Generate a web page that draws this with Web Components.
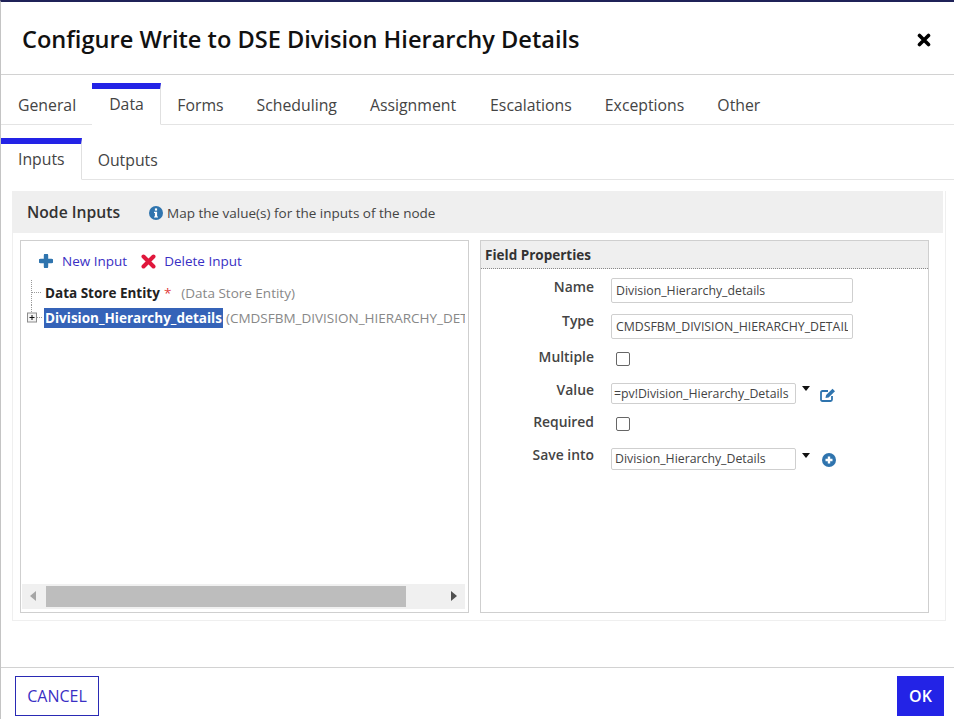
<!DOCTYPE html>
<html>
<head>
<meta charset="utf-8">
<title>Configure Write to DSE Division Hierarchy Details</title>
<style>
    html, body { margin: 0; padding: 0; background: #fff; }
    body { font-family: "Open Sans", "Liberation Sans", sans-serif; color: #444; overflow: hidden; }
</style>
</head>
<body>
<node-dialog heading="Configure Write to DSE Division Hierarchy Details">
    <tab-bar slot="tabs" top="8">
        <tab-item>General</tab-item>
        <tab-item active>Data</tab-item>
        <tab-item style="margin-left:.5px">Forms</tab-item>
        <tab-item>Scheduling</tab-item>
        <tab-item>Assignment</tab-item>
        <tab-item style="margin-left:1px">Escalations</tab-item>
        <tab-item>Exceptions</tab-item>
        <tab-item>Other</tab-item>
    </tab-bar>
    <tab-bar slot="tabs" top="13">
        <tab-item active>Inputs</tab-item>
        <tab-item>Outputs</tab-item>
    </tab-bar>
    <node-panel heading="Node Inputs" hint="Map the value(s) for the inputs of the node">
        <input-tree slot="left"></input-tree>
        <field-properties slot="right"></field-properties>
    </node-panel>
</node-dialog>

<script>
const BLUE = '#2323e6';
const ICON_BLUE = '#2f74ae';

// --- dialog shell ---
class NodeDialog extends HTMLElement {
    constructor() {
        super();
        this.attachShadow({ mode: 'open' });
    }
    connectedCallback() {
        const heading = this.getAttribute('heading') || '';
        this.shadowRoot.innerHTML = `
            <style>
                :host { display: flex; flex-direction: column; height: 719px; box-sizing: border-box;
                        border-top: 2px solid #1f2258; border-left: 1px solid #c4c4c4; }
                .head { height: 73px; flex: none; box-sizing: border-box; border-bottom: 1px solid #d2d2d2; padding: 3px 23px 0 21px;
                        display: flex; align-items: center; justify-content: space-between; }
                h1 { margin: 0; font-size: 23.6px; font-weight: 600; color: #111; line-height: 1; }
                svg { display: block; }
                .body { flex: 1; min-height: 0; }
                .foot { height: 52px; flex: none; box-sizing: border-box; border-top: 1px solid #d2d2d2; padding: 8px 10px 3px 14px;
                        display: flex; justify-content: space-between; }
                button { font: 600 16px "Open Sans", "Liberation Sans", sans-serif; height: 40px; box-sizing: border-box; padding: 0; }
                .cancel { width: 84px; background: #fff; color: #3a2fc4; border: 1px solid #2a2ab4; font-weight: 400; }
                .ok { width: 47px; background: ${BLUE}; color: #fff; border: 0; font-weight: 600; }
            </style>
            <div class="head">
                <h1>${heading}</h1>
                <svg width="14" height="14" viewBox="0 0 14 14"><path d="M2.500 2.500l9 9M11.500 2.500l-9 9" stroke="#000" stroke-width="3.600" stroke-linecap="round"/></svg>
            </div>
            <div class="body"><slot name="tabs"></slot><slot></slot></div>
            <div class="foot">
                <button class="cancel">CANCEL</button>
                <button class="ok">OK</button>
            </div>
        `;
    }
}

// --- tabs ---
class TabBar extends HTMLElement {
    constructor() {
        super();
        this.attachShadow({ mode: 'open' });
    }
    connectedCallback() {
        const top = this.getAttribute('top') || '0';
        this.shadowRoot.innerHTML = `
            <style>
                :host { display: flex; align-items: flex-end; border-bottom: 1px solid #e4e4e4;
                        padding: ${top}px 0 0 17px; gap: 33px; }
            </style>
            <slot></slot>
        `;
    }
}

class TabItem extends HTMLElement {
    constructor() {
        super();
        this.attachShadow({ mode: 'open' });
    }
    connectedCallback() {
        this.shadowRoot.innerHTML = `
            <style>
                :host { display: block; font-size: 15.8px; line-height: 22px; color: #444; padding: 9px 0 9px; margin-bottom: -1px; }
                :host([active]) { border-top: 6px solid ${BLUE}; border-right: 1px solid #e0e0e0; border-bottom: 1px solid #fff;
                                  padding: 4px 16px 9px 17px; margin-left: -17px; margin-right: -17px; }
            </style>
            <slot></slot>
        `;
    }
}

// --- grey panel with the two boxes ---
class NodePanel extends HTMLElement {
    constructor() {
        super();
        this.attachShadow({ mode: 'open' });
    }
    connectedCallback() {
        this.shadowRoot.innerHTML = `
            <style>
                :host { display: block; margin: 11px 8px 0 11px; height: 430px; box-sizing: border-box; border: 1px solid #efefef; border-top: 0; }
                .bar { height: 42px; background: #efefef; display: flex; align-items: center; padding-left: 14px; margin-right: 2px; }
                .title { font-size: 15.7px; font-weight: 600; color: #333; width: 122px; }
                .hint { font-size: 13.5px; color: #444; display: flex; align-items: center; gap: 4px; margin-top: 1px; }
                .cols { display: flex; gap: 11px; padding: 7px 0 0 7px; }
                svg { display: block; }
            </style>
            <div class="bar">
                <span class="title">${this.getAttribute('heading')}</span>
                <span class="hint">
                    <svg width="14" height="14" viewBox="0 0 14 14"><circle cx="7" cy="7" r="7" fill="${ICON_BLUE}"/><rect x="5.900" y="2.400" width="2.200" height="2.200" fill="#fff"/><path d="M5 5.800h3.100v4.600H9v1.200H5v-1.200h.9V7H5z" fill="#fff"/></svg>
                    ${this.getAttribute('hint')}
                </span>
            </div>
            <div class="cols"><slot name="left"></slot><slot name="right"></slot></div>
        `;
    }
}

// --- left box: toolbar, tree, scrollbar ---
class InputTree extends HTMLElement {
    constructor() {
        super();
        this.attachShadow({ mode: 'open' });
    }
    connectedCallback() {
        this.shadowRoot.innerHTML = `
            <style>
                :host { display: flex; flex-direction: column; width: 449px; height: 373px; box-sizing: border-box; border: 1px solid #cfcfcf; }
                .tools { display: flex; align-items: center; padding: 10px 0 0 18px; height: 30px; box-sizing: border-box; font-size: 13.5px; color: #3a2fc4; }
                .tools svg { display: block; margin-right: 8px; }
                .tools svg:first-child { margin-right: 9px; }
                .tools span { margin-right: 14px; }
                .tree { padding: 9px 0 0 10px; width: 444px; box-sizing: border-box; overflow: hidden; white-space: nowrap; font-size: 13.5px; line-height: 20px; }
                .row { display: flex; align-items: center; height: 25px; }
                .row svg { display: block; flex: none; }
                b { font-weight: 700; color: #222; }
                i { font-style: normal; color: #888; }
                .req { color: #e03a3a; margin: 0 10px 0 4px; }
                .sel { background: #3563b8; color: #fff; padding: 0 1px; margin-right: 3px; }
                .scroll { margin: auto 3px 3px 1px; height: 25px; background: #f0f0f0; position: relative; }
                .thumb { position: absolute; left: 24px; top: 2px; bottom: 2px; width: 360px; background: #bdbdbd; }
                .arrow { position: absolute; top: 7px; width: 0; height: 0; border-top: 5.500px solid transparent; border-bottom: 5.500px solid transparent; }
                .al { left: 8px; border-right: 6px solid #a6a6a6; }
                .ar { right: 8px; border-left: 6px solid #505050; }
            </style>
            <div class="tools">
                <svg width="14" height="14" viewBox="0 0 14 14"><path d="M7 1.500v11M1.500 7h11" stroke="${ICON_BLUE}" stroke-width="4.400" stroke-linecap="round" fill="none"/></svg>
                <span>New Input</span>
                <svg width="15" height="15" viewBox="0 0 15 15"><path d="M2.500 2.500l10 10M12.500 2.500l-10 10" stroke="#e0173c" stroke-width="4" stroke-linecap="round"/></svg>
                <span>Delete Input</span>
            </div>
            <div class="tree">
                <div class="row">
                    <svg width="14" height="25" viewBox="0 0 14 25"><path d="M.5 0v25M1 12.500h9" stroke="#999" stroke-dasharray="1 1" fill="none"/></svg>
                    <b>Data Store Entity</b><span class="req">*</span><i>(Data Store Entity)</i>
                </div>
                <div class="row">
                    <svg width="17" height="25" viewBox="0 0 17 25" style="margin-left:-4px"><path d="M4.500 0v7M10 12.500h6" stroke="#999" stroke-dasharray="1 1" fill="none"/><rect x=".5" y="8" width="9" height="9" fill="#f4f4f4" stroke="#8c8c8c"/><path d="M2.500 12.500h5M5 10v5" stroke="#111"/></svg>
                    <b class="sel">Division_Hierarchy_details</b><i>(CMDSFBM_DIVISION_HIERARCHY_DETAILS)</i>
                </div>
            </div>
            <div class="scroll"><span class="arrow al"></span><span class="thumb"></span><span class="arrow ar"></span></div>
        `;
    }
}

// --- right box ---
class FieldRow extends HTMLElement {
    constructor() {
        super();
        this.attachShadow({ mode: 'open' });
    }
    connectedCallback() {
        const h = this.getAttribute('h') || '33';
        this.shadowRoot.innerHTML = `
            <style>
                :host { display: flex; height: ${h}px; align-items: flex-start; }
                .label { width: 113px; text-align: right; font-size: 13.900px; font-weight: 600; color: #444; line-height: 20px; margin-right: 17px; }
            </style>
            <div class="label">${this.getAttribute('label')}</div>
            <slot></slot>
        `;
    }
}

class TextField extends HTMLElement {
    constructor() {
        super();
        this.attachShadow({ mode: 'open' });
    }
    connectedCallback() {
        const w = this.getAttribute('w') || '242';
        const h = this.getAttribute('h') || '25';
        const pad = this.getAttribute('pad') || '4';
        const top = this.getAttribute('top') || '1';
        this.shadowRoot.innerHTML = `
            <style>
                :host { display: block; width: ${w}px; height: ${h}px; box-sizing: border-box; border: 1px solid #cfcfcf; border-radius: 2px;
                        font-size: 12.300px; color: #444; line-height: ${h - 2}px; padding: 0 ${pad}px; margin-top: ${top}px; }
                div { overflow: hidden; white-space: nowrap; }
            </style>
            <div><slot></slot></div>
        `;
    }
}

class CheckField extends HTMLElement {
    constructor() {
        super();
        this.attachShadow({ mode: 'open' });
    }
    connectedCallback() {
        this.shadowRoot.innerHTML = `
            <style>
                :host { display: block; width: 12px; height: 12px; border: 1px solid #666; border-radius: 2px; margin: 5px 0 0 5px; }
            </style>
        `;
    }
}

class DropCaret extends HTMLElement {
    constructor() {
        super();
        this.attachShadow({ mode: 'open' });
    }
    connectedCallback() {
        this.shadowRoot.innerHTML = `
            <style>
                :host { display: block; flex: none; width: 0; height: 0; border: 4.500px solid transparent; border-top: 5px solid #111; border-bottom: 0; margin: 6px 7px 0 6px; }
            </style>
        `;
    }
}

class FieldProperties extends HTMLElement {
    constructor() {
        super();
        this.attachShadow({ mode: 'open' });
    }
    connectedCallback() {
        this.shadowRoot.innerHTML = `
            <style>
                :host { display: block; width: 449px; height: 373px; box-sizing: border-box; border: 1px solid #cfcfcf; font-family: inherit; }
                .title { height: 28px; box-sizing: border-box; background: #efefef; border-bottom: 1px dotted #888; font-size: 13.500px; font-weight: 700;
                         color: #333; line-height: 28px; padding-left: 4px; }
                .rows { padding-top: 8px; }
                svg { display: block; flex: none; }
            </style>
            <div class="title">Field Properties</div>
            <div class="rows">
                <field-row label="Name" h="34"><text-field>Division_Hierarchy_details</text-field></field-row>
                <field-row label="Type" h="36"><text-field top="3">CMDSFBM_DIVISION_HIERARCHY_DETAILS</text-field></field-row>
                <field-row label="Multiple" h="33"><check-field></check-field></field-row>
                <field-row label="Value" h="32">
                    <text-field w="185" h="21" pad="2" top="3">=pv!Division_Hierarchy_Details</text-field><drop-caret></drop-caret>
                    <svg style="margin:8px 0 0 3px" width="16" height="14" viewBox="0 0 16 14"><path d="M12 8v3.500q0 1.500-1.500 1.500H2.500Q1 13 1 11.500V4.500Q1 3 2.500 3H8" fill="none" stroke="${ICON_BLUE}" stroke-width="1.800"/><path d="M5.500 10l.6-3L12.500.8l2.500 2.500-6.400 6.200z" fill="${ICON_BLUE}"/></svg>
                </field-row>
                <field-row label="Required" h="33"><check-field></check-field></field-row>
                <field-row label="Save into">
                    <text-field w="185" h="22" pad="3" top="3">Division_Hierarchy_Details</text-field><drop-caret style="margin-top:8px"></drop-caret>
                    <svg style="margin:8px 0 0 5px" width="14" height="14" viewBox="0 0 14 14"><circle cx="7" cy="7" r="7" fill="${ICON_BLUE}"/><path d="M3.500 7h7M7 3.500v7" stroke="#fff" stroke-width="2.400"/></svg>
                </field-row>
            </div>
        `;
    }
}

customElements.define('node-dialog', NodeDialog);
customElements.define('tab-bar', TabBar);
customElements.define('tab-item', TabItem);
customElements.define('node-panel', NodePanel);
customElements.define('input-tree', InputTree);
customElements.define('field-row', FieldRow);
customElements.define('text-field', TextField);
customElements.define('check-field', CheckField);
customElements.define('drop-caret', DropCaret);
customElements.define('field-properties', FieldProperties);
</script>
</body>
</html>
